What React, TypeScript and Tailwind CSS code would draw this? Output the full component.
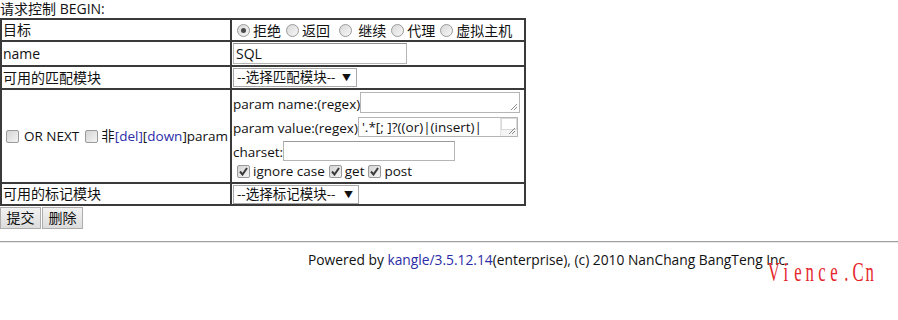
import React from 'react';

const font = { fontFamily: '"Open Sans", "Noto Sans CJK SC", sans-serif' };

function Radio({ checked = false }: { checked?: boolean }) {
  return (
    <span className="inline-flex w-[13px] h-[13px] ml-[5px] mr-[3px] rounded-full border border-[#9a9a9a] bg-gradient-to-br from-[#d8d8d8] to-[#f7f7f7] items-center justify-center shrink-0">
      {checked && <span className="w-[5px] h-[5px] rounded-full bg-[#4a4a4a]" />}
    </span>
  );
}

function Checkbox({ checked = false, className = '' }: { checked?: boolean; className?: string }) {
  return (
    <span className={`inline-flex w-[13px] h-[13px] rounded-[2px] border border-[#9a9a9a] bg-gradient-to-br from-[#d4d4d4] to-[#f4f4f4] items-center justify-center shrink-0 ${className}`}>
      {checked && (
        <svg width="9" height="9" viewBox="0 0 9 9">
          <path d="M1 4.5 L3.5 7.5 L8 1" fill="none" stroke="#3a3a3a" strokeWidth="2" />
        </svg>
      )}
    </span>
  );
}

function Grip() {
  return (
    <svg width="9" height="9" viewBox="0 0 9 9" className="absolute right-[1px] bottom-[1px]">
      <path d="M8 2 L2 8 M8 5 L5 8" stroke="#8c8c8c" strokeWidth="1" />
    </svg>
  );
}

function Select({ label, width }: { label: string; width: string }) {
  return (
    <div className={`relative h-[19px] border border-[#a9a9a9] bg-white text-[13.5px] leading-[17px] pl-[3px] whitespace-nowrap ${width}`}>
      {label}
      <span className="absolute right-[5px] top-[1px] text-[9px] leading-[15px]">▼</span>
    </div>
  );
}

export default function App() {
  const td = 'border-2 border-[#3a3a3a] p-0 align-middle overflow-hidden';
  return (
    <div className="relative w-[898px] h-[320px] bg-white text-[14px] text-[#111] overflow-hidden" style={font}>
      <div className="h-[17px] leading-[17px]">请求控制 BEGIN:</div>
      <table className="border-collapse table-fixed w-[524px] mt-[1px]">
        <colgroup>
          <col className="w-[230px]" />
          <col className="w-[294px]" />
        </colgroup>
        <tbody>
          <tr>
            <td className={td}>
              <div className="h-[20px] pl-[1px] leading-[20px]">目标</div>
            </td>
            <td className={td}>
              <div className="h-[20px] flex items-center whitespace-pre">
                <Radio checked />拒绝<Radio />返回 <Radio /> 继续<Radio />代理<Radio />虚拟主机
              </div>
            </td>
          </tr>
          <tr>
            <td className={td}>
              <div className="h-[23px] pl-[1px] leading-[23px]">name</div>
            </td>
            <td className={td}>
              <div className="h-[23px] flex items-center pl-[1px]">
                <div className="w-[174px] h-[21px] border border-[#b5b5b5] border-t-[#8f8f8f] leading-[19px] pl-[2px]">SQL</div>
              </div>
            </td>
          </tr>
          <tr>
            <td className={td}>
              <div className="h-[21px] pl-[1px] leading-[21px]">可用的匹配模块</div>
            </td>
            <td className={td}>
              <div className="h-[21px] flex items-center pl-[1px]">
                <Select label="--选择匹配模块--" width="w-[124px]" />
              </div>
            </td>
          </tr>
          <tr>
            <td className={td}>
              <div className="h-[92px] flex items-center whitespace-pre text-[13.5px]">
                <Checkbox className="ml-[4px] mr-[5px]" />OR NEXT<Checkbox className="ml-[6px] mr-[3px]" />非<span className="text-[#2c2ca8]">[del]</span>[<span className="text-[#2c2ca8]">down</span>]param
              </div>
            </td>
            <td className={td}>
              <div className="h-[92px] pl-[1px] flex flex-col whitespace-nowrap text-[13.5px]">
                <div className="flex items-end h-[23px]">
                  <span className="leading-[17px] shrink-0">param name:(regex)</span>
                  <div className="relative w-[160px] h-[21px] border border-[#b5b5b5] bg-white shrink-0">
                    <Grip />
                  </div>
                </div>
                <div className="flex items-end h-[24px]">
                  <span className="leading-[17px] shrink-0">param value:(regex)</span>
                  <div className="relative w-[160px] h-[20px] border border-[#b5b5b5] bg-white flex shrink-0">
                    <span className="flex-1 pl-[3px] leading-[18px] overflow-hidden">'.*[; ]?((or)|(insert)|</span>
                    <div className="w-[17px] border-l border-[#e5e5e5] bg-[#f4f4f4] relative">
                      <div className="h-[12px] border border-[#d9d9d9] bg-white" />
                      <Grip />
                    </div>
                  </div>
                </div>
                <div className="flex items-end h-[24px]">
                  <span className="leading-[17px] shrink-0">charset:</span>
                  <div className="w-[172px] h-[20px] border border-[#b5b5b5] border-t-[#9a9a9a] bg-white shrink-0" />
                </div>
                <div className="flex items-center h-[20px] whitespace-pre">
                  <Checkbox checked className="ml-[4px] mr-[3px]" />ignore case<Checkbox checked className="ml-[4px] mr-[3px]" />get<Checkbox checked className="ml-[4px] mr-[3px]" />post
                </div>
              </div>
            </td>
          </tr>
          <tr>
            <td className={td}>
              <div className="h-[20px] pl-[1px] leading-[20px]">可用的标记模块</div>
            </td>
            <td className={td}>
              <div className="h-[20px] flex items-center pl-[1px]">
                <Select label="--选择标记模块--" width="w-[126px]" />
              </div>
            </td>
          </tr>
        </tbody>
      </table>
      <div className="flex gap-[1px] mt-[1px]">
        <button className="h-[22px] w-[41px] border border-[#adadad] bg-gradient-to-b from-[#f2f2f2] to-[#dcdcdc] text-[14px] leading-[20px]">提交</button>
        <button className="h-[22px] w-[41px] border border-[#adadad] bg-gradient-to-b from-[#f2f2f2] to-[#dcdcdc] text-[14px] leading-[20px]">删除</button>
      </div>
      <div className="mt-[12px] border-t border-[#a0a0a0] border-b border-b-[#e8e8e8]" />
      <div className="mt-[8px] pl-[308px] leading-[18px] whitespace-nowrap text-[13.8px]">
        Powered by <span className="text-[#2c2ca8]">kangle/3.5.12.14</span>(enterprise), (c) 2010 NanChang BangTeng Inc.
      </div>
      <div className="absolute left-[768px] top-[259px] flex text-[#e5262b] text-[27px] leading-[27px]" style={{ fontFamily: '"Liberation Serif", serif' }}>
        {['V', 'i', 'e', 'n', 'c', 'e', '.', 'C', 'n'].map((c, i) => (
          <span key={i} className="w-[12px] flex justify-center">
            <span className="inline-block scale-x-[0.62]">{c}</span>
          </span>
        ))}
      </div>
    </div>
  );
}
